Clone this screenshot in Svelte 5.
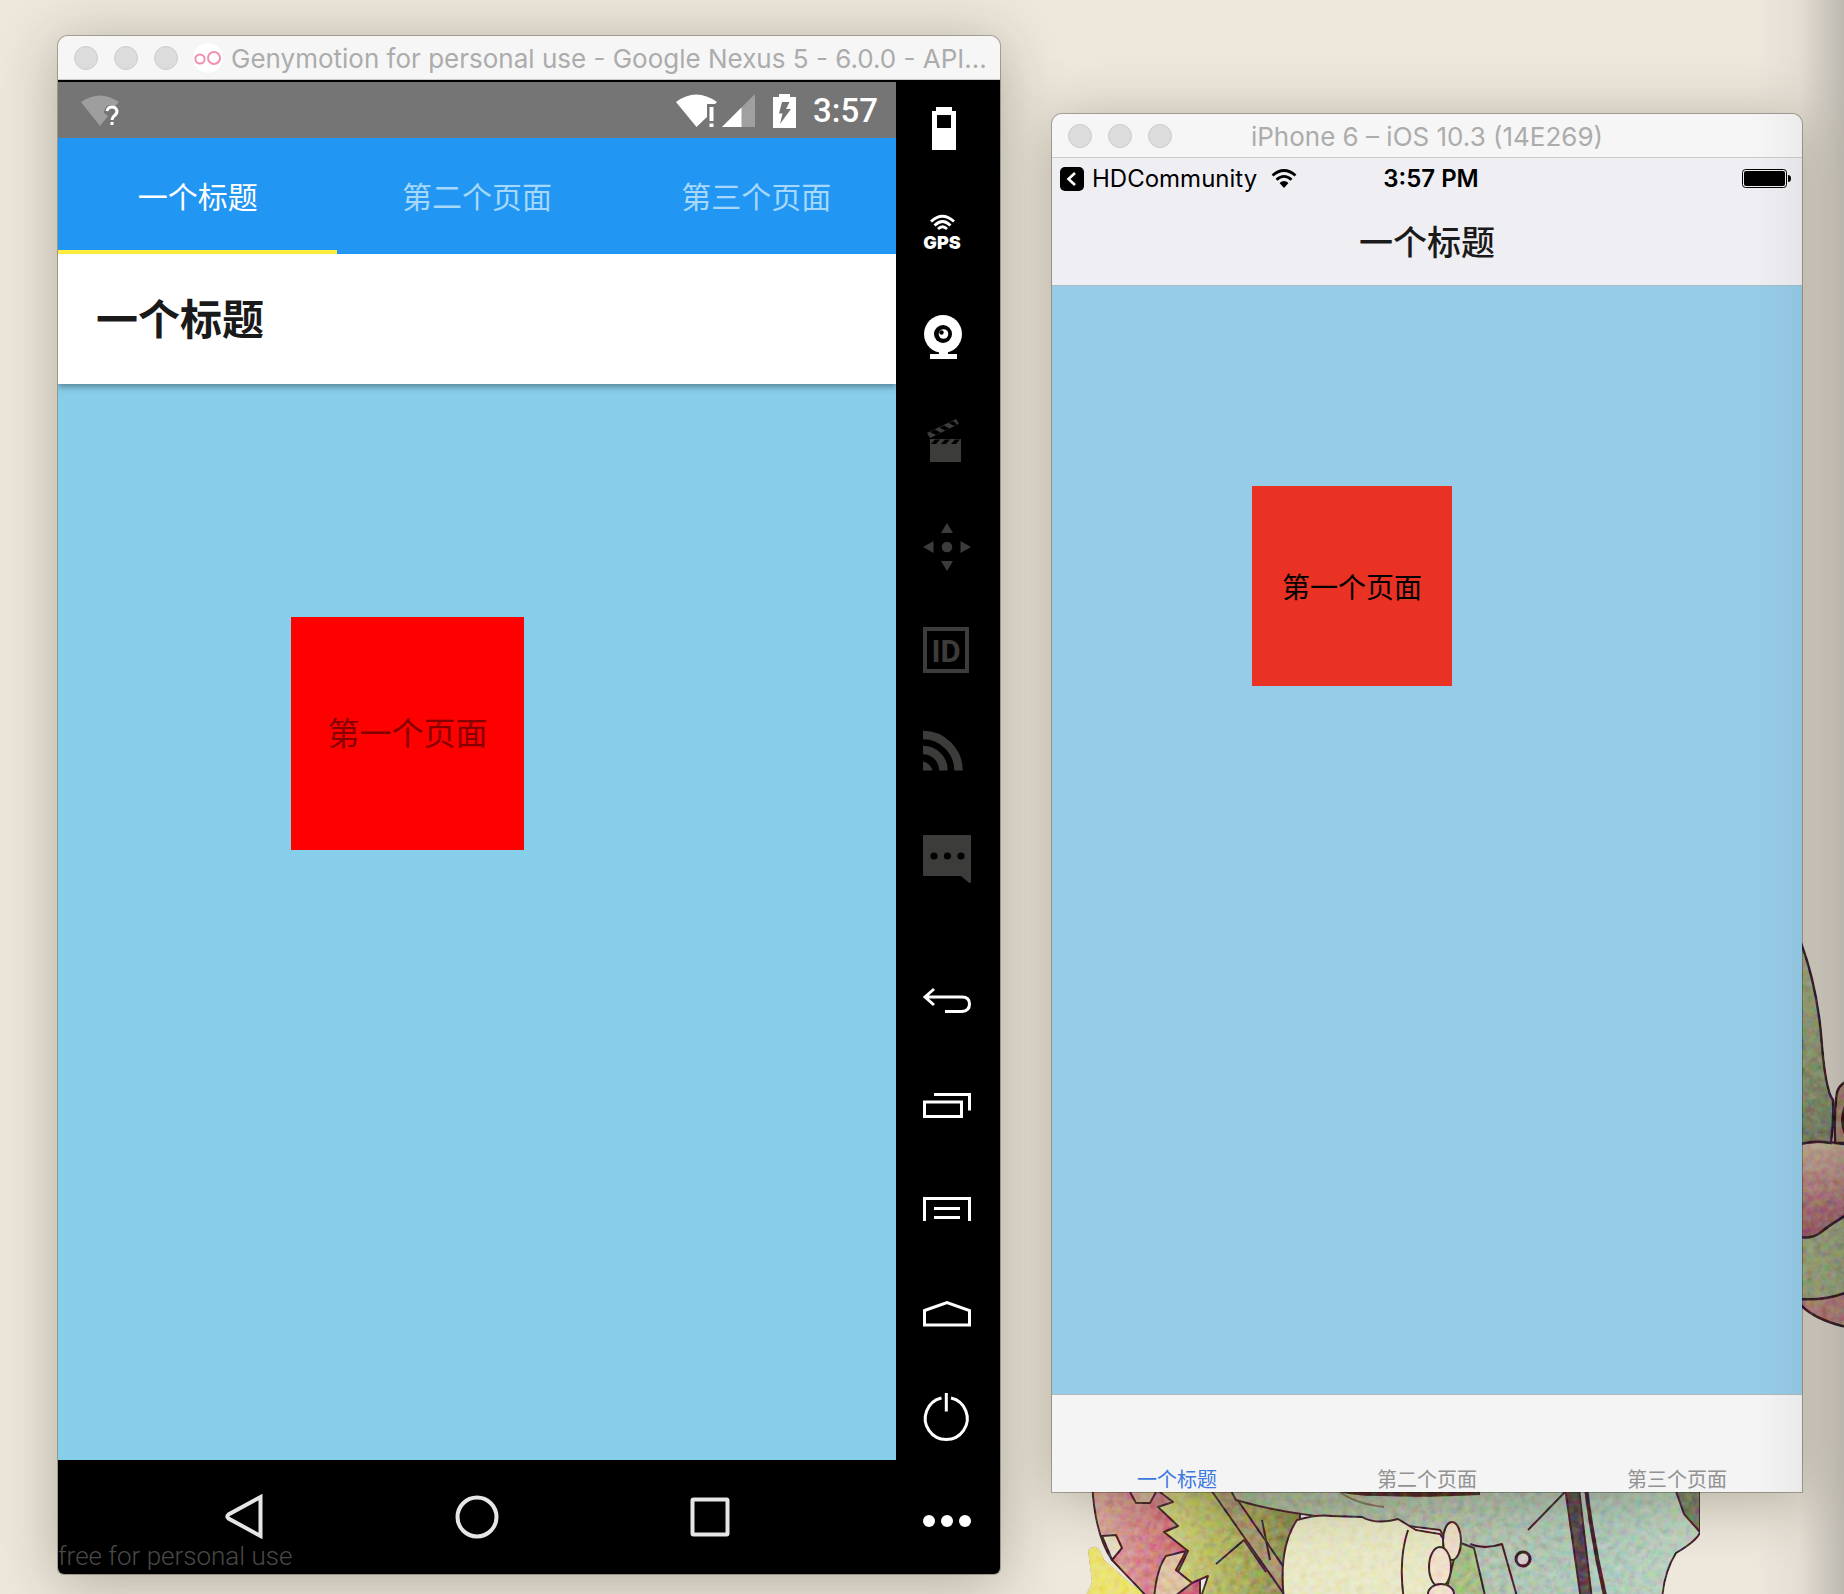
<script>
  const pages = ['一个标题', '第二个页面', '第三个页面'];
  let androidTab = $state(0);
  let iosTab = $state(0);
</script>

{#snippet lights()}
  <div class="lights">
    <button class="light" aria-label="Close"></button>
    <button class="light" aria-label="Minimize"></button>
    <button class="light" aria-label="Zoom"></button>
  </div>
{/snippet}

<div class="desktop">
  <svg class="art-side" viewBox="1802 940 42 400" aria-hidden="true">
    <defs>
      <linearGradient id="leaf" x1="0" y1="0" x2="0" y2="1">
        <stop offset="0" stop-color="#b4b890" />
        <stop offset="0.6" stop-color="#9aa77c" />
        <stop offset="1" stop-color="#818b72" />
      </linearGradient>
      <linearGradient id="petal" x1="0" y1="0" x2="0" y2="1">
        <stop offset="0" stop-color="#d9c2a6" />
        <stop offset="0.4" stop-color="#cb9894" />
        <stop offset="1" stop-color="#a85e70" />
      </linearGradient>
      <filter id="grain" x="0" y="0" width="100%" height="100%" color-interpolation-filters="sRGB">
        <feTurbulence type="fractalNoise" baseFrequency="0.14" numOctaves="3" seed="4" result="noise" />
        <feColorMatrix in="noise" type="matrix" values="0.8 0 0 0 0.12  0 0.8 0 0 0.12  0 0 0.8 0 0.12  0 0 0 0 1" result="tint" />
        <feBlend in="tint" in2="SourceGraphic" mode="soft-light" result="mix" />
        <feComposite in="mix" in2="SourceGraphic" operator="in" />
      </filter>
    </defs>
    <g filter="url(#grain)">
      <g stroke="#3a1d2a" stroke-width="2.5">
        <path d="M1800 1304 Q1814 1320 1850 1328 V1290 H1800Z" fill="#c48c88" />
        <path d="M1800 1230 L1850 1200 V1291 Q1826 1301 1800 1299Z" fill="#a9b48a" />
        <path d="M1800 1144 Q1820 1139 1850 1145 V1213 Q1832 1223 1820 1233 Q1811 1239 1800 1237Z" fill="url(#petal)" />
        <path d="M1800 940 Q1816 982 1821 1033 Q1825 1090 1833 1100 Q1834 1122 1831 1143 Q1814 1140 1800 1144Z" fill="url(#leaf)" />
        <path d="M1850 1080 Q1840 1083 1837 1092 Q1834 1110 1835 1143 H1850Z" fill="#b5917c" />
      </g>
      <path d="M1844 1106 q-6 14 0 28z" fill="#3a1d1a" />
    </g>
  </svg>

  <svg class="art-bottom" viewBox="1080 1484 640 110" aria-hidden="true">
    <defs>
      <linearGradient id="coat" x1="0" y1="0" x2="1" y2="0">
        <stop offset="0" stop-color="#a6b595" />
        <stop offset="0.45" stop-color="#b2bfa9" />
        <stop offset="0.8" stop-color="#aec8ba" />
        <stop offset="1" stop-color="#bfd2bf" />
      </linearGradient>
      <linearGradient id="rose" x1="0" y1="0" x2="1" y2="0">
        <stop offset="0" stop-color="#dcae9f" />
        <stop offset="1" stop-color="#cc5e72" />
      </linearGradient>
      <linearGradient id="foliage" x1="0" y1="0" x2="1" y2="0">
        <stop offset="0" stop-color="#d6d682" />
        <stop offset="0.5" stop-color="#b0b360" />
        <stop offset="1" stop-color="#86854e" />
      </linearGradient>
    </defs>
    <g filter="url(#grain)">
      <path d="M1088 1550 Q1098 1540 1104 1560 L1150 1600 H1084 L1092 1582Z" fill="#ebe270" />
      <g stroke="#44202c" stroke-width="2" stroke-linejoin="round">
        <path d="M1092 1480 Q1094 1534 1112 1560 L1150 1600 H1200 V1480Z" fill="url(#rose)" />
        <path d="M1158 1480 L1160 1492 L1173 1502 L1158 1507 L1178 1526 L1164 1532 L1188 1551 L1178 1572 L1192 1583 L1208 1576 L1200 1600 H1300 V1480Z" fill="url(#foliage)" />
        <path d="M1154 1600 Q1156 1570 1166 1556 L1186 1551 L1176 1570 L1192 1583 L1170 1600Z" fill="#dfc3a2" />
        <path d="M1102 1536 L1116 1535 L1122 1548 L1112 1560Z" fill="#e6dfc6" />
        <path d="M1130 1492 L1136 1503 L1150 1503 L1156 1492" fill="#d9b49f" />
        <path d="M1204 1480 L1284 1594 L1298 1588 L1224 1480Z" fill="#a89770" />
        <path d="M1216 1564 L1244 1540 L1266 1572 M1262 1520 L1270 1560" fill="none" />
        <path d="M1225 1480 L1236 1500 Q1290 1516 1360 1520 L1440 1530 L1480 1600 H1662 Q1664 1572 1676 1553 Q1698 1540 1700 1532 L1700 1480Z" fill="url(#coat)" />
        <path d="M1297 1520 Q1318 1514 1332 1516 L1362 1517 Q1376 1525 1398 1519 L1416 1530 L1440 1534 L1484 1600 H1284 Q1278 1548 1297 1520Z" fill="#e8e7c4" />
        <path d="M1458 1542 L1474 1548 L1486 1600 H1444Z" fill="#a6bd84" />
        <path d="M1408 1530 Q1398 1560 1404 1600" fill="none" />
        <ellipse cx="1452" cy="1541" rx="9" ry="19" fill="#eedfc6" />
        <ellipse cx="1440" cy="1567" rx="11" ry="20" fill="#f0e0cb" />
        <ellipse cx="1441" cy="1594" rx="13" ry="10" fill="#f0e0cb" />
        <path d="M1528 1530 L1565 1492 M1470 1544 Q1484 1550 1502 1544 L1518 1600" fill="none" />
        <path d="M1564 1480 L1581 1600 H1592 L1578 1480Z" fill="#59464a" />
        <path d="M1585 1480 Q1592 1540 1606 1600" fill="none" stroke-width="4" />
        <path d="M1672 1480 L1684 1514 L1700 1532 V1480Z" fill="#758066" />
        <circle cx="1523" cy="1559" r="7" fill="#d5ccd0" stroke-width="3" />
      </g>
      <path d="M1330 1484 H1480 V1495 Q1420 1498 1380 1496 Q1350 1496 1330 1490Z" fill="#4b2622" />
      <path d="M1340 1492 Q1356 1504 1384 1507" fill="none" stroke="#876a5c" stroke-width="2" />
    </g>
  </svg>

  <section class="window android">
    <header class="titlebar">
      {@render lights()}
      <svg class="logo" viewBox="0 0 30 30" aria-hidden="true">
        <circle cx="15" cy="15" r="15" fill="#fff" />
        <g fill="none" stroke="#f08fae" stroke-width="2"><circle cx="7" cy="16" r="4.6" /><circle cx="21" cy="15" r="6" /></g>
      </svg>
      <h1>Genymotion for personal use - Google Nexus 5 - 6.0.0 - API...</h1>
    </header>
    <div class="device">
      <div class="phone">
        <div class="a-status">
          <svg width="40" height="34" viewBox="0 0 40 34" aria-hidden="true">
            <path d="M1 8 Q20 -5 39 8 L35 12 Q25 8 24 19 L28 22 L20 32Z" fill="#9e9e9e" />
            <path d="M27 17 q1 -4 5 -4 t5 4 q0 3 -3 5 q-2 2 -2 4 M32 28 v3" fill="none" stroke="#fff" stroke-width="3" />
          </svg>
          <span class="grow"></span>
          <svg width="42" height="34" viewBox="0 0 42 34" aria-hidden="true">
            <path d="M0 8 Q20 -7 41 8 L39 10 H31 V23 L20.500 33Z" fill="#fff" />
            <path d="M35.500 13 V27 M35.500 29.500 V33" stroke="#fff" stroke-width="4" />
          </svg>
          <svg class="signal" width="34" height="34" viewBox="0 0 34 34" aria-hidden="true">
            <path d="M33 0 V33 H0Z" fill="#a0a0a0" />
            <path d="M19.500 13.500 V33 H0Z" fill="#fff" />
          </svg>
          <svg class="charge" width="24" height="34" viewBox="0 0 24 34" aria-hidden="true">
            <path d="M6 0 H17 V3 H23 V34 H0 V3 H6Z" fill="#fff" />
            <path d="M9 8 H16.500 L13 15 H18 L7 30 L9.500 19.500 H6Z" fill="#757575" />
          </svg>
          <time>3:57</time>
        </div>
        <div class="a-tabs" role="tablist">
          {#each pages as page, i}
            <button role="tab" aria-selected={androidTab === i} class:on={androidTab === i} onclick={() => (androidTab = i)}>{page}</button>
          {/each}
        </div>
        <div class="a-header"><h2>一个标题</h2></div>
        <main class="a-body"><div class="box">第一个页面</div></main>
        <nav class="a-nav">
          <button aria-label="Back"><svg viewBox="0 0 44 44"><path d="M38.500 2 V41 L6.500 23.500 Q4 21.500 6.500 19.500Z" /></svg></button>
          <button aria-label="Home"><svg viewBox="0 0 44 44"><circle cx="22" cy="22" r="19.500" /></svg></button>
          <button aria-label="Overview"><svg viewBox="0 0 44 44"><rect x="4.500" y="4.500" width="35" height="35" rx="1" /></svg></button>
          <small>free for personal use</small>
        </nav>
      </div>
      <aside class="tools">
        <div class="group">
          <button aria-label="Battery"><svg viewBox="0 0 48 48"><path fill="#fff" fill-rule="evenodd" d="M13 -1 H29 V3 H33 V42 H9 V3 H13Z M14 7 V20 H28 V7Z" /></svg></button>
          <button aria-label="GPS"><svg viewBox="0 0 48 48">
            <path d="M8 9.500 Q19.500 -1 31 9.500 M11.500 13.500 Q19.500 5.500 27.500 13.500 M15 17 Q19.500 12.500 24 17" fill="none" stroke="#fff" stroke-width="2.800" />
            <text class="gps" x="19" y="37" text-anchor="middle">GPS</text>
          </svg></button>
          <button aria-label="Camera"><svg viewBox="0 0 48 48">
            <circle cx="20" cy="18" r="19" fill="#fff" /><path d="M16 35 H25 V38 H34 V43 H7 V38 H16Z" fill="#fff" />
            <circle cx="20" cy="18" r="9" fill="#000" /><circle cx="20.500" cy="18" r="4.800" fill="#fff" /><circle cx="18.500" cy="16.500" r="2.200" fill="#000" />
          </svg></button>
          <button aria-label="Screencast"><svg viewBox="0 0 48 48">
            <path d="M4 13 L33 -1 L36 4 L7 18Z M7 19 H38 V42 H7Z" fill="#3c3c3b" />
            <path d="M7 12 L12 9.500 L17.500 12.500 L13 15Z M16.500 7.500 L21 5.500 L26.500 8.500 L22 10.500Z M25.500 3 L30 1 L34.500 4.500 L31 6Z M8 24 L12 19.500 H17 L13 24Z M18 24 L22 19.500 H27 L23 24Z M28 24 L32 19.500 H37 L33 24Z" fill="#000" />
          </svg></button>
          <button aria-label="Remote control"><svg viewBox="0 0 48 48"><g fill="#3c3c3b">
            <circle cx="24" cy="23" r="5.300" /><path d="M24 -1 L18 9 H30Z M24 47 L18 37 H30Z M0 23 L10.500 17 V29Z M48 23 L37.500 17 V29Z" />
          </g></svg></button>
          <button aria-label="Identifiers"><svg viewBox="0 0 48 48">
            <rect x="2" y="1" width="42" height="42" fill="none" stroke="#3c3c3b" stroke-width="4" />
            <text class="id" x="23" y="34" text-anchor="middle">ID</text>
          </svg></button>
          <button aria-label="Network"><svg viewBox="0 0 48 48">
            <path d="M0 3 A35.500 35.500 0 0 1 35.500 38.500 M0 18 A20.500 20.500 0 0 1 20.500 38.500" fill="none" stroke="#3c3c3b" stroke-width="8.500" /><path d="M0 29.500 Q7 31 9.500 38.500 H0Z" fill="#3c3c3b" />
          </svg></button>
          <button aria-label="Phone"><svg viewBox="0 0 48 48">
            <path d="M1 -1 H47 Q48 -1 48 0 V46 Q47 48 45 46 L38 40 H1 Q0 40 0 39 V0 Q0 -1 1 -1Z" fill="#3c3c3b" />
            <circle cx="11" cy="20" r="3.600" /><circle cx="24.500" cy="20" r="3.600" /><circle cx="38" cy="20" r="3.600" />
          </svg></button>
        </div>
        <div class="group line">
          <button aria-label="Back key"><svg viewBox="0 0 48 48"><path d="M11 11 L2 19 L11 27 M2 19 H39 Q46.500 19 46.500 26 T39 33.500 H22" /></svg></button>
          <button aria-label="Recent apps key"><svg viewBox="0 0 48 48"><path d="M11 12.500 H46.500 V28.500 M1.500 20 H38.500 V34.500 H1.500Z" /></svg></button>
          <button aria-label="Menu key"><svg viewBox="0 0 48 48"><path d="M1.500 35 V12.500 H46.500 V35 M11 22.500 H37 M11 31.500 H37" /></svg></button>
          <button aria-label="Home key"><svg viewBox="0 0 48 48"><path d="M1.500 20.500 L24 12.500 L46.500 20.500 V35 H1.500Z" /></svg></button>
          <button aria-label="Power"><svg viewBox="0 0 48 48"><path d="M18.500 4 A21 21 0 1 0 28 4" /><path d="M23.300 -1 V17.500" /></svg></button>
          <button aria-label="More"><svg class="solid" viewBox="0 0 48 48"><circle cx="6" cy="23" r="6" /><circle cx="24" cy="23" r="6" /><circle cx="42" cy="23" r="6" /></svg></button>
        </div>
      </aside>
    </div>
  </section>

  <section class="window ios">
    <header class="titlebar">
      {@render lights()}
      <h1 class="middle">iPhone 6 – iOS 10.3 (14E269)</h1>
    </header>
    <div class="i-status">
      <a href="#back">
        <svg width="24" height="24" viewBox="0 0 24 24" aria-hidden="true"><rect width="24" height="24" rx="5" /><path d="M15 6 L8.500 12 L15 18" fill="none" stroke="#fff" stroke-width="2.600" /></svg>
        HDCommunity
        <svg class="wifi" width="26" height="20" viewBox="0 0 26 20" aria-hidden="true">
          <path d="M1.500 6.500 Q13 -3.500 24.500 6.500 M5.500 10.700 Q13 4 20.500 10.700" fill="none" stroke="#000" stroke-width="2.800" />
          <path d="M8.500 14 Q13 10 17.500 14 L13 19Z" />
        </svg>
      </a>
      <time>3:57 PM</time>
      <svg class="battery" width="50" height="20" viewBox="0 0 50 20" aria-hidden="true">
        <rect x="0.500" y="0.500" width="44" height="18" rx="3" fill="none" stroke="#000" /><rect x="2" y="2" width="41" height="15" rx="2" /><path d="M46 6 Q49 6 49 9.500 T46 13Z" />
      </svg>
    </div>
    <div class="i-header"><h2>一个标题</h2></div>
    <main class="i-body"><div class="box">第一个页面</div></main>
    <div class="i-tabs" role="tablist">
      {#each pages as page, i}
        <button role="tab" aria-selected={iosTab === i} class:on={iosTab === i} onclick={() => (iosTab = i)}>{page}</button>
      {/each}
    </div>
  </section>
  <div class="edge-shade"></div>
</div>

<style>
  :global(body) { margin: 0; }
  .desktop {
    position: relative;
    overflow: hidden;
    box-sizing: border-box;
    min-height: 100vh;
    padding: 36px 42px 20px 58px;
    display: grid;
    grid-template-columns: minmax(0, 942fr) minmax(0, 750fr);
    gap: 52px;
    background: #ede7dc;
    font-family: Inter, "Noto Sans CJK SC", sans-serif;
  }
  button { border: 0; padding: 0; margin: 0; background: none; font: inherit; color: inherit; }
  h1, h2 { margin: 0; }
  svg { display: block; flex: none; overflow: visible; }
  .art-side { position: absolute; right: 0; top: 940px; width: 42px; height: 400px; overflow: hidden; }
  .art-bottom { position: absolute; right: 124px; bottom: 0; width: 640px; height: 110px; overflow: hidden; }
  .edge-shade {
    position: absolute; top: 0; right: 0; bottom: 0; width: 90px; pointer-events: none;
    background: linear-gradient(to right, transparent, rgba(0, 0, 0, 0.04) 50%, rgba(0, 0, 0, 0.2));
  }

  .window {
    position: relative;
    display: flex;
    flex-direction: column;
    border-radius: 10px 10px 0 0;
    box-shadow: 0 0 0 1px rgba(0, 0, 0, 0.26), 0 8px 60px rgba(60, 56, 30, 0.34);
  }
  .titlebar {
    position: relative;
    box-sizing: border-box;
    height: 44px;
    padding: 0 16px;
    display: flex;
    align-items: center;
    background: #f6f6f6;
    border-bottom: 1px solid #cbcbcb;
    border-radius: 10px 10px 0 0;
  }
  .titlebar h1 { flex: 1; min-width: 0; padding-top: 2px; font-size: 26px; line-height: 34px; font-weight: 400; color: #acacac; white-space: nowrap; }
  .titlebar h1.middle { text-align: center; margin-right: 104px; }
  .lights { display: flex; gap: 16px; }
  .light { box-sizing: border-box; width: 24px; height: 24px; border-radius: 50%; background: #dcdcdc; border: 1px solid #cdcdcd; }
  .logo { width: 30px; height: 30px; margin: 0 8px 0 15px; }

  .android { border-radius: 10px 10px 6px 6px; }
  .device { flex: 1; display: flex; background: #000; border-radius: 0 0 6px 6px; }
  .phone { flex: 1; min-width: 0; display: flex; flex-direction: column; padding-top: 2px; }
  .grow { flex: 1; }
  .a-status { box-sizing: border-box; height: 56px; padding: 2px 18px 0 22px; display: flex; align-items: center; background: #757575; color: #fff; }
  .a-status .signal { margin-left: 4px; }
  .a-status .charge { margin: 0 16px 0 17px; }
  .a-status time { font: 500 33px/40px Roboto, sans-serif; }
  .a-tabs { height: 116px; display: flex; background: #2196f3; }
  .a-tabs button { flex: 1; box-sizing: border-box; padding-top: 6px; border-bottom: 4px solid transparent; font-size: 30px; line-height: 40px; color: #a6d8fb; }
  .a-tabs button.on { color: #fff; border-color: #ffeb3b; }
  .a-header { position: relative; box-sizing: border-box; height: 130px; padding: 2px 38px 0; display: flex; align-items: center; background: #fff; box-shadow: 0 3px 6px rgba(0, 0, 0, 0.35); clip-path: inset(0 0 -12px 0); }
  .a-header h2 { font-size: 42px; line-height: 56px; font-weight: 700; color: #1a1a1a; }
  .a-body { flex: 1; padding: 233px; background: #87ceeb; }
  .box { display: flex; align-items: center; justify-content: center; white-space: nowrap; }
  .a-body .box { width: 233px; height: 233px; background: #f00; color: #850000; font-size: 32px; line-height: 44px; }
  .a-nav { position: relative; height: 114px; display: flex; justify-content: center; align-items: center; gap: 189px; }
  .a-nav svg { width: 44px; height: 44px; fill: none; stroke: #e6e6e6; stroke-width: 4; }
  .a-nav small { position: absolute; left: 0; bottom: 1px; font: 300 26px/34px Roboto, sans-serif; color: #484848; }

  .tools { width: 104px; display: flex; flex-direction: column; justify-content: space-between; }
  .group button { display: flex; align-items: center; width: 104px; height: 104px; padding-left: 27px; }
  .group svg { width: 48px; height: 48px; }
  .line svg { fill: none; stroke: #fff; stroke-width: 3; }
  .line svg.solid { fill: #fff; stroke: none; }
  .gps { font: 900 18px Inter, sans-serif; fill: #fff; }
  .id { font: 700 31px Roboto, sans-serif; fill: #3c3c3b; }

  .ios { margin: 78px 0 82px; }
  .i-status { box-sizing: border-box; height: 40px; padding: 2px 0 0 8px; display: grid; grid-template-columns: 1fr auto 1fr; align-items: center; background: #efeef3; font-size: 24px; line-height: 32px; color: #000; }
  .i-status a { display: flex; align-items: center; gap: 8px; color: inherit; text-decoration: none; }
  .i-status .wifi { margin-left: 6px; }
  .i-status time { font-weight: 600; }
  .i-status .battery { justify-self: end; margin-right: 10px; }
  .i-header { box-sizing: border-box; height: 88px; padding-top: 2px; display: flex; align-items: center; justify-content: center; background: #efeef3; border-bottom: 1px solid #a9bcc8; }
  .i-header h2 { font-size: 34px; line-height: 44px; font-weight: 500; color: #1a1a1a; }
  .i-body { flex: 1; padding: 200px; background: #97cce8; }
  .i-body .box { width: 200px; height: 200px; background: #e93223; color: #000; font-size: 28px; }
  .i-tabs { box-sizing: border-box; height: 98px; display: flex; align-items: flex-end; background: #f4f4f4; border-top: 1px solid #b4b8ba; }
  .i-tabs button { flex: 1; font-size: 20px; line-height: 24px; color: #929292; }
  .i-tabs button.on { color: #3d78e0; }
</style>
